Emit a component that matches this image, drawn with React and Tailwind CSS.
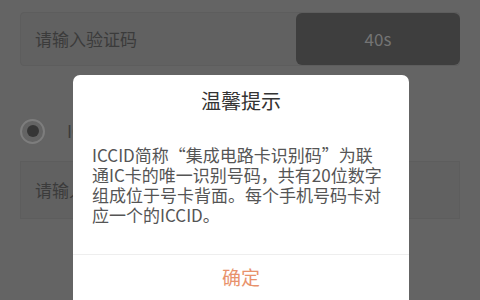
import React from 'react';

export default function App() {
  return (
    <div
      className="relative w-[480px] h-[300px] overflow-hidden bg-[#646464]"
      style={{ fontFamily: '"Noto Sans CJK SC", "Noto Sans", sans-serif' }}
    >
      {/* page under the overlay */}
      <div className="px-5 pt-3">
        <div className="flex h-[54px] bg-[#616161] border border-[#5d5d5d] rounded-sm">
          <div className="flex-1 flex items-center pl-[14px] text-[17px] text-[#3b3b3b]">请输入验证码</div>
          <div className="w-[164px] -mr-px rounded-md bg-[#3e3e3e] flex items-center justify-center text-[17px] text-[#747474]">
            40s
          </div>
        </div>

        <div className="flex items-center h-[30px] mt-[50px] gap-[22px]">
          <div className="w-[25px] h-[25px] rounded-full border-[2px] border-[#7d7d7d] flex items-center justify-center">
            <div className="w-[12px] h-[12px] rounded-full bg-[#363636]" />
          </div>
          <span className="text-[17px] text-[#3b3b3b]">ICCID</span>
        </div>

        <div className="flex items-center h-[58px] mt-[15px] bg-[#616161] border border-[#5d5d5d] pl-[14px] text-[17px] text-[#3b3b3b]">
          请输入ICCID号码
        </div>
      </div>

      {/* dialog */}
      <div className="absolute left-[73px] top-[75px] w-[336px] h-[240px] bg-white rounded-t-[7px] flex flex-col">
        <div className="pt-3 text-center text-[20px] leading-[28px] text-[#333]">温馨提示</div>
        <p className="mt-[30px] px-[19px] text-[17px] leading-[20px] text-[#555] whitespace-nowrap">
          ICCID简称“集成电路卡识别码”为联
          <br />
          通IC卡的唯一识别号码，共有20位数字
          <br />
          组成位于号卡背面。每个手机号码卡对
          <br />
          应一个的ICCID。
        </p>
        <div className="mt-[29px] border-t border-[#eeeeee] h-[46px] flex items-center justify-center text-[19px] text-[#e8926c]">
          确定
        </div>
      </div>
    </div>
  );
}
